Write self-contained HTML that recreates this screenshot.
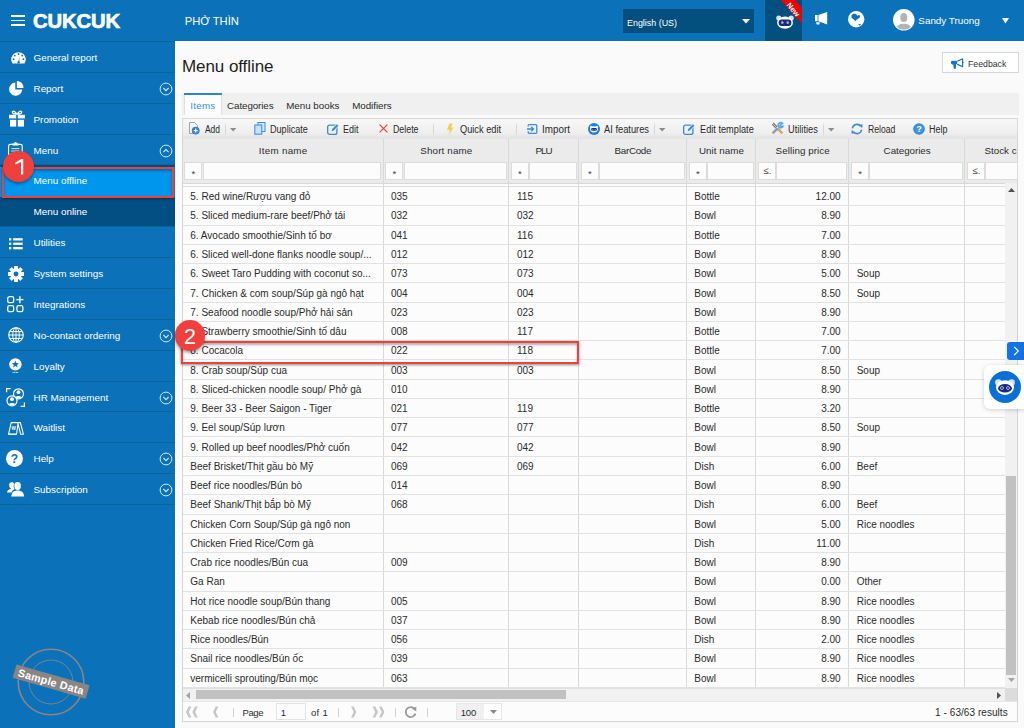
<!DOCTYPE html><html><head><meta charset='utf-8'><style>
*{box-sizing:border-box}
html,body{margin:0;padding:0}
body{width:1024px;height:728px;overflow:hidden;position:relative;background:#fafafa;font-family:'Liberation Sans',sans-serif;}
.t{position:absolute;line-height:normal;white-space:nowrap}
.r{position:absolute}
svg{position:absolute;overflow:visible}
</style></head><body>
<div class='r' style='left:0px;top:0px;width:1024px;height:41px;background:#0b71b8'></div>
<div class='r' style='left:11px;top:14.8px;width:13.8px;height:1.8px;background:#fff'></div>
<div class='r' style='left:11px;top:19.6px;width:13.8px;height:1.8px;background:#fff'></div>
<div class='r' style='left:11px;top:24.4px;width:13.8px;height:1.8px;background:#fff'></div>
<div class='t' style='top:10px;font-size:20.2px;color:#fff;font-weight:bold;left:33px;-webkit-text-stroke:0.7px #fff;letter-spacing:-0.1px'>CUKCUK</div>
<div class='t' style='top:15px;font-size:11.2px;color:#fff;left:184.7px;'>PHỞ THÌN</div>
<div class='r' style='left:622.8px;top:8.8px;width:131px;height:24px;background:#03507f'></div>
<div class='t' style='top:17px;font-size:9.8px;color:#fff;transform:scaleX(0.9090);transform-origin:0 0;left:627px;'>English (US)</div>
<svg style='left:742px;top:19px' width='8' height='5'><path d='M0 0H8L4 4.5Z' fill='#fff'/></svg>
<div class='r' style='left:765px;top:0px;width:37px;height:41px;background:#03507f'></div>
<svg style='left:765px;top:0' width='37' height='41'><polygon points='16,0 30.3,0 36.8,7.5 36.8,23.8' fill='#f20000'/><text x='0' y='0' transform='translate(28.2,9.6) rotate(49)' font-family='Liberation Sans' font-weight='bold' font-size='7.6' fill='#fff' text-anchor='middle' dominant-baseline='central'>New</text></svg>
<svg style='left:776px;top:15px' width='18' height='14' viewBox='0 0 18 14'>
<circle cx='2.8' cy='3' r='2.6' fill='#cfe6f7'/><circle cx='15.2' cy='3' r='2.6' fill='#cfe6f7'/>
<ellipse cx='9' cy='7.6' rx='8' ry='6.2' fill='#fff'/>
<rect x='2.6' y='4.6' width='12.8' height='6.4' rx='3.2' fill='#1a2a80'/>
<circle cx='6.3' cy='7.6' r='1.3' fill='#9ab3d8'/><circle cx='11.7' cy='7.6' r='1.3' fill='#9ab3d8'/>
</svg>
<svg style='left:815px;top:12px' width='13' height='13' viewBox='0 0 13 13'>
<rect x='0' y='3' width='2.6' height='6.2' fill='#fff'/>
<polygon points='3.4,3 12.2,0 12.2,12.5 3.4,9.3' fill='#fff'/>
<path d='M1 10.2 H5 L4.2 12.6 H1.8Z' fill='#fff'/>
</svg>
<svg style='left:847.8px;top:10.6px' width='16.4' height='16.4' viewBox='0 0 16 16'>
<circle cx='8' cy='8' r='8' fill='#fff'/>
<path d='M3.4 4.4 C4.2 3.2 5.2 2.7 6.3 2.8 C7.2 2.8 8 3.2 8.4 3.6 L9.1 4.6 L10.6 4 L11.9 4.7 C11.6 5.8 11.4 6.5 10.8 7 C10 7.5 9.4 7.7 8.8 8.2 L7 10 C6.5 9.2 6 8.6 5.4 8.1 C4.4 7.6 3.6 7 3.4 6.4Z' fill='#0b71b8'/>
<path d='M10 12.4 L13 13.2 L10.8 14.4Z' fill='#0b71b8'/>
</svg>
<svg style='left:892.7px;top:8.7px' width='21.6' height='21.6' viewBox='0 0 22 22'>
<circle cx='11' cy='11' r='11' fill='#fff'/>
<clipPath id='avc'><circle cx='11' cy='11' r='10.2'/></clipPath>
<g clip-path='url(#avc)' fill='#b3b3b3'><ellipse cx='11' cy='8.6' rx='3.6' ry='4.6'/><path d='M3 22 C3.6 16.6 6.5 15 11 15 C15.5 15 18.4 16.6 19 22Z'/></g>
</svg>
<div class='t' style='top:15px;font-size:9.9px;color:#fff;left:918.3px;'>Sandy Truong</div>
<svg style='left:1002px;top:17.5px' width='7' height='6'><path d='M0 0H7L3.5 5.5Z' fill='#fff'/></svg>
<div class='r' style='left:0px;top:41px;width:175px;height:687px;background:#0b71b8'></div>
<div class='r' style='left:0px;top:164.98000000000002px;width:175px;height:61.74px;background:#034f84'></div>
<div class='r' style='left:0px;top:167px;width:175px;height:29.5px;background:#0096ee'></div>
<div class='r' style='left:0px;top:41px;width:175px;height:1px;background:#08659a'></div>
<div class='r' style='left:0px;top:72px;width:175px;height:1px;background:#08659a'></div>
<div class='r' style='left:0px;top:103px;width:175px;height:1px;background:#08659a'></div>
<div class='r' style='left:0px;top:134px;width:175px;height:1px;background:#08659a'></div>
<div class='r' style='left:0px;top:164px;width:175px;height:1px;background:#08659a'></div>
<div class='r' style='left:0px;top:226px;width:175px;height:1px;background:#08659a'></div>
<div class='r' style='left:0px;top:257px;width:175px;height:1px;background:#08659a'></div>
<div class='r' style='left:0px;top:288px;width:175px;height:1px;background:#08659a'></div>
<div class='r' style='left:0px;top:319px;width:175px;height:1px;background:#08659a'></div>
<div class='r' style='left:0px;top:350px;width:175px;height:1px;background:#08659a'></div>
<div class='r' style='left:0px;top:381px;width:175px;height:1px;background:#08659a'></div>
<div class='r' style='left:0px;top:411px;width:175px;height:1px;background:#08659a'></div>
<div class='r' style='left:0px;top:442px;width:175px;height:1px;background:#08659a'></div>
<div class='r' style='left:0px;top:473px;width:175px;height:1px;background:#08659a'></div>
<div class='r' style='left:0px;top:504px;width:175px;height:1px;background:#08659a'></div>
<div class='t' style='top:52px;font-size:9.9px;color:#fff;left:33.5px;'>General report</div>
<div class='t' style='top:83px;font-size:9.9px;color:#fff;left:33.5px;'>Report</div>
<div class='t' style='top:114px;font-size:9.9px;color:#fff;left:33.5px;'>Promotion</div>
<div class='t' style='top:145px;font-size:9.9px;color:#fff;left:33.5px;'>Menu</div>
<div class='t' style='top:175px;font-size:9.9px;color:#fff;left:33.5px;'>Menu offline</div>
<div class='t' style='top:206px;font-size:9.9px;color:#fff;left:33.5px;'>Menu online</div>
<div class='t' style='top:237px;font-size:9.9px;color:#fff;left:33.5px;'>Utilities</div>
<div class='t' style='top:268px;font-size:9.9px;color:#fff;left:33.5px;'>System settings</div>
<div class='t' style='top:299px;font-size:9.9px;color:#fff;left:33.5px;'>Integrations</div>
<div class='t' style='top:330px;font-size:9.9px;color:#fff;left:33.5px;'>No-contact ordering</div>
<div class='t' style='top:361px;font-size:9.9px;color:#fff;left:33.5px;'>Loyalty</div>
<div class='t' style='top:392px;font-size:9.9px;color:#fff;left:33.5px;'>HR Management</div>
<div class='t' style='top:422px;font-size:9.9px;color:#fff;left:33.5px;'>Waitlist</div>
<div class='t' style='top:453px;font-size:9.9px;color:#fff;left:33.5px;'>Help</div>
<div class='t' style='top:484px;font-size:9.9px;color:#fff;left:33.5px;'>Subscription</div>
<svg style='left:159px;top:81.97px' width='14' height='14' viewBox='-7 -7 14 14'><circle r='5.9' fill='none' stroke='#d6e8f5' stroke-width='1'/><path d='M-2.6 -1.0 L0 1.6 L2.6 -1.0' fill='none' stroke='#d6e8f5' stroke-width='1.1'/></svg>
<svg style='left:159px;top:328.93px' width='14' height='14' viewBox='-7 -7 14 14'><circle r='5.9' fill='none' stroke='#d6e8f5' stroke-width='1'/><path d='M-2.6 -1.0 L0 1.6 L2.6 -1.0' fill='none' stroke='#d6e8f5' stroke-width='1.1'/></svg>
<svg style='left:159px;top:390.67px' width='14' height='14' viewBox='-7 -7 14 14'><circle r='5.9' fill='none' stroke='#d6e8f5' stroke-width='1'/><path d='M-2.6 -1.0 L0 1.6 L2.6 -1.0' fill='none' stroke='#d6e8f5' stroke-width='1.1'/></svg>
<svg style='left:159px;top:452.41px' width='14' height='14' viewBox='-7 -7 14 14'><circle r='5.9' fill='none' stroke='#d6e8f5' stroke-width='1'/><path d='M-2.6 -1.0 L0 1.6 L2.6 -1.0' fill='none' stroke='#d6e8f5' stroke-width='1.1'/></svg>
<svg style='left:159px;top:483.28000000000003px' width='14' height='14' viewBox='-7 -7 14 14'><circle r='5.9' fill='none' stroke='#d6e8f5' stroke-width='1'/><path d='M-2.6 -1.0 L0 1.6 L2.6 -1.0' fill='none' stroke='#d6e8f5' stroke-width='1.1'/></svg>
<svg style='left:159px;top:143.71px' width='14' height='14' viewBox='-7 -7 14 14'><circle r='5.9' fill='none' stroke='#d6e8f5' stroke-width='1'/><path d='M-2.6 1.2 L0 -1.4 L2.6 1.2' fill='none' stroke='#d6e8f5' stroke-width='1.1'/></svg>
<svg style='left:10.5px;top:52px' width='15' height='12' viewBox='0 0 15 12'>
<path d='M1.5 11.6 A7.3 7.3 0 1 1 13.5 11.6 Z' fill='#fff'/>
<circle cx='2.6' cy='7.2' r='0.9' fill='#0b71b8'/><circle cx='3.8' cy='3.6' r='0.9' fill='#0b71b8'/><circle cx='7.5' cy='2' r='0.9' fill='#0b71b8'/><circle cx='11.2' cy='3.6' r='0.9' fill='#0b71b8'/><circle cx='12.4' cy='7.2' r='0.9' fill='#0b71b8'/>
<path d='M7.1 10.6 L8.6 4.6 L8.2 10.6Z' fill='#0b71b8'/><circle cx='7.6' cy='10.4' r='1.2' fill='#0b71b8'/>
</svg>
<svg style='left:8.5px;top:81px' width='15' height='15' viewBox='0 0 15 15'>
<path d='M6.3 1.6 A6.6 6.6 0 1 0 13.3 8.6 L6.3 8.6Z' fill='#fff'/>
<path d='M7.9 0 A6.6 6.6 0 0 1 14.6 6.9 L7.9 6.9Z' fill='#fff'/>
</svg>
<svg style='left:9px;top:110.4px' width='16' height='17' viewBox='0 0 16 17'>
<path d='M7.6 4.2 C6.5 1.2 3.6 0.4 3.3 2.2 C3.0 3.6 5.6 4.2 7.6 4.2Z M8.4 4.2 C9.5 1.2 12.4 0.4 12.7 2.2 C13.0 3.6 10.4 4.2 8.4 4.2Z' fill='none' stroke='#fff' stroke-width='1.3'/>
<rect x='0' y='4.8' width='7.2' height='3.6' fill='#fff'/><rect x='8.8' y='4.8' width='7.2' height='3.6' fill='#fff'/>
<rect x='1' y='9.8' width='6.2' height='6.8' fill='#fff'/><rect x='8.8' y='9.8' width='6.2' height='6.8' fill='#fff'/>
</svg>
<svg style='left:8.2px;top:141.8px' width='15' height='17' viewBox='0 0 15 17'>
<rect x='0.6' y='2.4' width='13.6' height='14' rx='1.6' fill='none' stroke='#fff' stroke-width='1.1'/>
<path d='M4.4 3.6 V1.6 H6 A1.5 1.5 0 0 1 9 1.6 H10.6 V3.6Z' fill='#fff'/>
<rect x='3.4' y='6.2' width='8' height='0.9' fill='#fff'/><rect x='3.4' y='8.6' width='8' height='0.9' fill='#fff'/><rect x='3.4' y='11' width='8' height='0.9' fill='#fff'/>
</svg>
<svg style='left:9px;top:237.8px' width='14' height='12' viewBox='0 0 14 12'>
<rect x='0' y='0.2' width='2.3' height='2.3' fill='#fff'/><rect x='0' y='4.6' width='2.3' height='2.3' fill='#fff'/><rect x='0' y='9' width='2.3' height='2.3' fill='#fff'/>
<rect x='4.2' y='0.2' width='9.5' height='2.3' fill='#fff'/><rect x='4.2' y='4.6' width='9.5' height='2.3' fill='#fff'/><rect x='4.2' y='9' width='9.5' height='2.3' fill='#fff'/>
</svg>
<svg style='left:8.2px;top:265.5px' width='16' height='16' viewBox='-8 -8 16 16'><rect x='-1.9' y='-8' width='3.8' height='4' rx='0.6' transform='rotate(0)' fill='#fff'/><rect x='-1.9' y='-8' width='3.8' height='4' rx='0.6' transform='rotate(45)' fill='#fff'/><rect x='-1.9' y='-8' width='3.8' height='4' rx='0.6' transform='rotate(90)' fill='#fff'/><rect x='-1.9' y='-8' width='3.8' height='4' rx='0.6' transform='rotate(135)' fill='#fff'/><rect x='-1.9' y='-8' width='3.8' height='4' rx='0.6' transform='rotate(180)' fill='#fff'/><rect x='-1.9' y='-8' width='3.8' height='4' rx='0.6' transform='rotate(225)' fill='#fff'/><rect x='-1.9' y='-8' width='3.8' height='4' rx='0.6' transform='rotate(270)' fill='#fff'/><rect x='-1.9' y='-8' width='3.8' height='4' rx='0.6' transform='rotate(315)' fill='#fff'/>
<circle r='5.7' fill='#fff'/><circle r='2.4' fill='#0b71b8'/></svg>
<svg style='left:6.9px;top:296.4px' width='17' height='17' viewBox='0 0 17 17'>
<rect x='0.7' y='0.7' width='6' height='6' rx='1.8' fill='none' stroke='#fff' stroke-width='1.3'/>
<rect x='0.7' y='9.7' width='6' height='6' rx='1.8' fill='none' stroke='#fff' stroke-width='1.3'/>
<rect x='9.9' y='9.7' width='6' height='6' rx='1.8' fill='none' stroke='#fff' stroke-width='1.3'/>
<path d='M12.9 0.2 V7.2 M9.4 3.7 H16.4' stroke='#fff' stroke-width='1.3'/>
</svg>
<svg style='left:8.2px;top:327px' width='16' height='16' viewBox='-8 -8 16 16'>
<circle r='7.3' fill='none' stroke='#fff' stroke-width='1.1'/>
<ellipse rx='3.3' ry='7.3' fill='none' stroke='#fff' stroke-width='1'/>
<path d='M0 -7.3 V7.3 M-7.3 0 H7.3 M-6.4 -3.4 H6.4 M-6.4 3.4 H6.4' stroke='#fff' stroke-width='1'/>
</svg>
<svg style='left:9px;top:357.6px' width='13' height='16' viewBox='0 0 13 16'>
<circle cx='6.4' cy='6.4' r='6.2' fill='#fff'/>
<path d='M6.4 2.6 L7.4 5.1 L10 5.2 L8 6.9 L8.7 9.5 L6.4 8 L4.1 9.5 L4.8 6.9 L2.8 5.2 L5.4 5.1Z' fill='#0b71b8'/>
<path d='M3.6 14.4 H9.2' stroke='#fff' stroke-width='1' stroke-dasharray='1 0.6'/>
</svg>
<svg style='left:6px;top:387.8px' width='19' height='19' viewBox='0 0 19 19'>
<clipPath id='hr1'><circle cx='12.5' cy='5.8' r='4.5'/></clipPath><clipPath id='hr2'><circle cx='6' cy='12.8' r='4.5'/></clipPath>
<path d='M0.6 4.2 V0.6 H4.6 M14.6 18.4 H18.4 V14.4' fill='none' stroke='#fff' stroke-width='1.2'/>
<circle cx='12.5' cy='5.8' r='5' fill='#0b71b8' stroke='#fff' stroke-width='1.2'/>
<g clip-path='url(#hr1)' fill='#fff'><circle cx='12.5' cy='4.2' r='1.9'/><ellipse cx='12.5' cy='10.8' rx='3.8' ry='2.9'/></g>
<circle cx='6' cy='12.8' r='5' fill='#0b71b8' stroke='#fff' stroke-width='1.2'/>
<g clip-path='url(#hr2)' fill='#fff'><circle cx='6' cy='11.2' r='1.9'/><ellipse cx='6' cy='17.8' rx='3.8' ry='2.9'/></g>
</svg>
<svg style='left:7.8px;top:422px' width='16' height='13' viewBox='0 0 16 13'>
<path d='M0.6 12.2 L3.2 0.6 H12.4 L15.4 12.2 H12.6 L10 1.6 L8.6 12.2Z' fill='none' stroke='#fff' stroke-width='1.1' stroke-linejoin='round'/>
<path d='M0.6 12.2 H8.6' stroke='#fff' stroke-width='1.1'/>
<text x='5.6' y='7.6' font-size='4.6' font-family='Liberation Sans' font-weight='bold' fill='#fff' text-anchor='middle'>W</text>
</svg>
<svg style='left:6.2px;top:449.9px' width='17' height='17' viewBox='-8.5 -8.5 17 17'>
<circle r='8.5' fill='#fff'/>
<text x='0' y='4.3' font-size='12' font-family='Liberation Sans' font-weight='bold' fill='#0b71b8' text-anchor='middle'>?</text>
</svg>
<svg style='left:6.6px;top:482.3px' width='18' height='15' viewBox='0 0 18 15'>
<path d='M4.8 0.2 C2.6 0.2 2 2 2.2 3.6 C2.4 5.2 3.2 6.6 4.4 6.8 C1.8 7.4 0.4 8.6 0 10.4 L4.6 10.4 C5 8.8 6.4 7.6 7.6 7.2 C6.4 5.6 6.6 3 7 1.4 C6.6 0.6 5.8 0.2 4.8 0.2Z' fill='#fff'/>
<ellipse cx='10.6' cy='4' rx='3.3' ry='3.9' fill='#fff'/>
<path d='M10.6 8.6 C6.6 8.6 4.6 10.6 4.2 14.6 H17.2 C16.8 10.6 14.6 8.6 10.6 8.6Z' fill='#fff'/>
</svg>
<svg style='left:10px;top:641px' width='82' height='82' viewBox='-41 -41 82 82'>
<circle r='32.8' fill='none' stroke='#8d8580' stroke-width='1.6'/>
<circle r='22' fill='none' stroke='#8d8580' stroke-width='0.9'/>
<g transform='rotate(16)'><rect x='-38' y='-7.4' width='76' height='14' fill='#8a8584'/>
<text x='0' y='3.6' font-size='10.8' font-family='Liberation Sans' font-weight='bold' letter-spacing='0.3' fill='#fff' text-anchor='middle'>Sample Data</text></g>
</svg>
<div class='t' style='top:57px;font-size:17px;color:#1e1e1e;letter-spacing:-0.074px;left:182px;'>Menu offline</div>
<div class='r' style='left:942.4px;top:52.3px;width:76.4px;height:21.2px;background:#fff;border:1px solid #d7d7d7'></div>
<svg style='left:951px;top:58px' width='14' height='12' viewBox='0 0 14 12'>
<rect x='0' y='2.7' width='6.2' height='3.8' rx='1.4' fill='#1976c2'/>
<path d='M2.2 5.2 H5 L4.9 10.2 Q4.8 10.9 3.7 10.9 Q2.7 10.9 2.6 10.2Z' fill='#1976c2'/>
<path d='M6.2 3.2 L11.6 0.9 V8.7 L6.2 6.1' fill='none' stroke='#1976c2' stroke-width='1.2' stroke-linejoin='round'/>
<path d='M11.8 3.9 L12.9 4.6 L11.8 5.4Z' fill='#1976c2'/>
</svg>
<div class='t' style='top:58px;font-size:9.6px;color:#333;transform:scaleX(0.9103);transform-origin:0 0;left:967.8px;'>Feedback</div>
<div class='r' style='left:182.3px;top:93px;width:836.3px;height:21.8px;background:#f0f0f0'></div>
<div class='r' style='left:183.5px;top:93px;width:38px;height:22px;background:#fcfcfc;border-left:1px solid #e0e0e0;border-right:1px solid #e0e0e0'></div>
<div class='r' style='left:183.5px;top:93px;width:38px;height:2px;background:#2c84d2'></div>
<div class='t' style='top:100px;font-size:9.8px;color:#3d8fd6;letter-spacing:0.235px;left:190.3px;'>Items</div>
<div class='t' style='top:100px;font-size:9.8px;color:#2b2b2b;letter-spacing:-0.099px;left:227.1px;'>Categories</div>
<div class='t' style='top:100px;font-size:9.8px;color:#2b2b2b;letter-spacing:-0.010px;left:286.2px;'>Menu books</div>
<div class='t' style='top:100px;font-size:9.8px;color:#2b2b2b;letter-spacing:-0.045px;left:352.2px;'>Modifiers</div>
<div class='r' style='left:182.3px;top:118px;width:836px;height:21px;background:linear-gradient(#f8f8f8,#eeeeee 70%,#e2e2e2);border:1px solid #d9d9d9;border-bottom:none'></div>
<div class='t' style='top:124px;font-size:10px;color:#2b2b2b;transform:scaleX(0.8432);transform-origin:0 0;left:205px;'>Add</div>
<div class='t' style='top:124px;font-size:10px;color:#2b2b2b;transform:scaleX(0.9067);transform-origin:0 0;left:270.4px;'>Duplicate</div>
<div class='t' style='top:124px;font-size:10px;color:#2b2b2b;transform:scaleX(0.8996);transform-origin:0 0;left:343px;'>Edit</div>
<div class='t' style='top:124px;font-size:10px;color:#2b2b2b;transform:scaleX(0.8820);transform-origin:0 0;left:393px;'>Delete</div>
<div class='t' style='top:124px;font-size:10px;color:#2b2b2b;transform:scaleX(0.9222);transform-origin:0 0;left:460px;'>Quick edit</div>
<div class='t' style='top:124px;font-size:10px;color:#2b2b2b;transform:scaleX(0.9880);transform-origin:0 0;left:542px;'>Import</div>
<div class='t' style='top:124px;font-size:10px;color:#2b2b2b;transform:scaleX(0.9305);transform-origin:0 0;left:604.4px;'>AI features</div>
<div class='t' style='top:124px;font-size:10px;color:#2b2b2b;transform:scaleX(0.9210);transform-origin:0 0;left:699.75px;'>Edit template</div>
<div class='t' style='top:124px;font-size:10px;color:#2b2b2b;transform:scaleX(0.9231);transform-origin:0 0;left:788px;'>Utilities</div>
<div class='t' style='top:124px;font-size:10px;color:#2b2b2b;transform:scaleX(0.8599);transform-origin:0 0;left:867.5px;'>Reload</div>
<div class='t' style='top:124px;font-size:10px;color:#2b2b2b;transform:scaleX(0.8994);transform-origin:0 0;left:929px;'>Help</div>
<div class='r' style='left:224.75px;top:121.5px;width:1px;height:15px;background:linear-gradient(rgba(0,0,0,0),#d6d6d6 30%,#d6d6d6 70%,rgba(0,0,0,0))'></div>
<div class='r' style='left:433px;top:121.5px;width:1px;height:15px;background:linear-gradient(rgba(0,0,0,0),#d6d6d6 30%,#d6d6d6 70%,rgba(0,0,0,0))'></div>
<div class='r' style='left:515.6px;top:121.5px;width:1px;height:15px;background:linear-gradient(rgba(0,0,0,0),#d6d6d6 30%,#d6d6d6 70%,rgba(0,0,0,0))'></div>
<div class='r' style='left:653.75px;top:121.5px;width:1px;height:15px;background:linear-gradient(rgba(0,0,0,0),#d6d6d6 30%,#d6d6d6 70%,rgba(0,0,0,0))'></div>
<div class='r' style='left:823px;top:121.5px;width:1px;height:15px;background:linear-gradient(rgba(0,0,0,0),#d6d6d6 30%,#d6d6d6 70%,rgba(0,0,0,0))'></div>
<svg style='left:229.75px;top:128px' width='7' height='4'><path d='M0 0H6.4L3.2 3.6Z' fill='#8c8c8c'/></svg>
<svg style='left:659.4px;top:128px' width='7' height='4'><path d='M0 0H6.4L3.2 3.6Z' fill='#8c8c8c'/></svg>
<svg style='left:827.5px;top:128px' width='7' height='4'><path d='M0 0H6.4L3.2 3.6Z' fill='#8c8c8c'/></svg>
<svg style='left:189px;top:122.2px' width='11' height='13' viewBox='0 0 11 13'>
<path d='M0.5 0.5 H5.6 L8.4 3.3 V7 M0.5 0.5 V11.5 H5' fill='#f4f4f4' stroke='#9a9a9a' stroke-width='0.9'/>
<circle cx='6.7' cy='8.6' r='3.9' fill='#2f82d0'/>
<path d='M6.7 6.6 V10.6 M4.7 8.6 H8.7' stroke='#fff' stroke-width='1.2'/>
</svg>
<svg style='left:254px;top:122px' width='12' height='13' viewBox='0 0 12 13'>
<rect x='4' y='0.5' width='7' height='9' fill='#d7ebfb' stroke='#3b8bd8' stroke-width='1'/>
<rect x='0.8' y='3' width='7' height='9.2' fill='#c5e1f8' stroke='#3b8bd8' stroke-width='1'/>
</svg>
<svg style='left:326.5px;top:122.8px' width='12' height='12' viewBox='0 0 12.5 12'><rect x='0.7' y='2' width='9.6' height='9.6' rx='2' fill='none' stroke='#3b8bd8' stroke-width='1.4'/>
<path d='M4.2 9 L4.9 5.6 L10.3 0.2 L12.8 2.7 L7.4 8.1Z' fill='#f3f3f3'/><path d='M4.8 8.4 L5.4 6 L10.3 1.1 L11.9 2.7 L7 7.6Z' fill='#3b8bd8'/></svg>
<svg style='left:683px;top:122.8px' width='12' height='12' viewBox='0 0 12.5 12'><rect x='0.7' y='2' width='9.6' height='9.6' rx='2' fill='none' stroke='#3b8bd8' stroke-width='1.4'/>
<path d='M4.2 9 L4.9 5.6 L10.3 0.2 L12.8 2.7 L7.4 8.1Z' fill='#f3f3f3'/><path d='M4.8 8.4 L5.4 6 L10.3 1.1 L11.9 2.7 L7 7.6Z' fill='#3b8bd8'/></svg>
<svg style='left:378.5px;top:124px' width='9' height='9' viewBox='0 0 9 9'>
<path d='M0.6 0.6 L8.4 8.4 M8.4 0.6 L0.6 8.4' stroke='#e8423b' stroke-width='1.2'/></svg>
<svg style='left:446px;top:122.5px' width='8' height='12' viewBox='0 0 8 12'>
<path d='M3.4 0.6 H6.6 L5.1 4.6 H7.4 L2.8 12 L3.7 6.8 H1Z' fill='#f5cf45'/></svg>
<svg style='left:527px;top:124px' width='11' height='10' viewBox='0 0 11 10'>
<path d='M1.2 2.6 V1.6 Q1.2 0.7 2.2 0.7 H8.8 Q9.8 0.7 9.8 1.7 V8.3 Q9.8 9.3 8.8 9.3 H2.2 Q1.2 9.3 1.2 8.3 V7.2' fill='none' stroke='#3b8bd8' stroke-width='1.3'/>
<path d='M0 5 H6.4 M4.2 2.8 L6.5 5 L4.2 7.2' fill='none' stroke='#3b8bd8' stroke-width='1.3'/></svg>
<svg style='left:588px;top:122.6px' width='12' height='12' viewBox='-6 -6 12 12'>
<circle r='6' fill='#1a7be6'/><circle cx='-2.9' cy='-2' r='1.3' fill='#dbe9f8'/><circle cx='2.9' cy='-2' r='1.3' fill='#dbe9f8'/><ellipse cx='0' cy='0.3' rx='3.9' ry='3.1' fill='#fff'/><rect x='-2.9' y='-1' width='5.8' height='2.8' rx='1.3' fill='#1b2f86'/>
<circle cx='-1.2' cy='0.4' r='0.5' fill='#8fb5e8'/><circle cx='1.2' cy='0.4' r='0.5' fill='#8fb5e8'/></svg>
<svg style='left:771px;top:122.4px' width='13' height='13' viewBox='0 0 13 13'>
<path d='M1.6 11.4 L6.5 6.5' stroke='#d9a664' stroke-width='2.6'/>
<path d='M6.5 6.5 L11.4 11.4' stroke='#d9a664' stroke-width='2.6'/>
<path d='M2.2 1 L6.2 5 M1 2.2 L5 6.2' stroke='#7a7a7a' stroke-width='1.2'/>
<path d='M11.6 1.4 A2.6 2.6 0 1 0 12 4.4 L10 4.6 L9 3.4Z M6.6 6.4 L2.2 10.8' stroke='#55a8e8' stroke-width='1.6' fill='none'/>
</svg>
<svg style='left:851px;top:122.6px' width='12' height='12' viewBox='-6 -6 12 12'>
<path d='M-4.6 -0.6 A4.6 4.6 0 0 1 3.6 -2.8' fill='none' stroke='#3b8bd8' stroke-width='1.5'/>
<path d='M4.6 0.6 A4.6 4.6 0 0 1 -3.6 2.8' fill='none' stroke='#3b8bd8' stroke-width='1.5'/>
<path d='M1.8 -4.6 L5.6 -4.6 L5.2 -0.8Z' fill='#3b8bd8'/><path d='M-1.8 4.6 L-5.6 4.6 L-5.2 0.8Z' fill='#3b8bd8'/>
</svg>
<svg style='left:913px;top:122.6px' width='12' height='12' viewBox='-6 -6 12 12'>
<circle r='5.8' fill='#2f86d6'/><circle r='4.6' fill='#3f97e2'/>
<text x='0' y='3.2' font-size='8.6' font-weight='bold' font-family='Liberation Sans' fill='#fff' text-anchor='middle'>?</text></svg>
<div class='r' style='left:182px;top:139px;width:836.3px;height:583.4px;background:#fcfcfc;border:1px solid #d4d4d4;border-top:none'></div>
<div class='r' style='left:183px;top:139px;width:834.3px;height:44px;background:#ebebeb'></div>
<div class='r' style='left:183px;top:182.5px;width:834.3px;height:1px;background:#d8d8d8'></div>
<div class='r' style='left:183px;top:186.3px;width:822px;height:1px;background:#dedede'></div>
<div class='t' style='top:145px;font-size:9.8px;color:#2b2b2b;letter-spacing:0.276px;left:258.75px;'>Item name</div>
<div class='r' style='left:184px;top:162.3px;width:18px;height:18px;background:#fcfcfc;border:1px solid #dcdcdc'></div>
<div class='r' style='left:202.5px;top:162.3px;width:178.5px;height:18px;background:#fcfcfc;border:1px solid #dcdcdc'></div>
<div class='t' style='top:168px;font-size:9.5px;color:#444;left:191.5px;'>*</div>
<div class='r' style='left:383px;top:139px;width:1px;height:548.5px;background:#d9d9d9'></div>
<div class='t' style='top:145px;font-size:9.8px;color:#2b2b2b;letter-spacing:0.149px;left:420.25px;'>Short name</div>
<div class='r' style='left:385px;top:162.3px;width:18px;height:18px;background:#fcfcfc;border:1px solid #dcdcdc'></div>
<div class='r' style='left:403.5px;top:162.3px;width:103.0px;height:18px;background:#fcfcfc;border:1px solid #dcdcdc'></div>
<div class='t' style='top:168px;font-size:9.5px;color:#444;left:392.5px;'>*</div>
<div class='r' style='left:508px;top:139px;width:1px;height:548.5px;background:#d9d9d9'></div>
<div class='t' style='top:145px;font-size:9.8px;color:#2b2b2b;letter-spacing:-1.030px;left:535.5px;'>PLU</div>
<div class='r' style='left:510.5px;top:162.3px;width:18px;height:18px;background:#fcfcfc;border:1px solid #dcdcdc'></div>
<div class='r' style='left:529.0px;top:162.3px;width:47.5px;height:18px;background:#fcfcfc;border:1px solid #dcdcdc'></div>
<div class='t' style='top:168px;font-size:9.5px;color:#444;left:518.0px;'>*</div>
<div class='r' style='left:578px;top:139px;width:1px;height:548.5px;background:#d9d9d9'></div>
<div class='t' style='top:145px;font-size:9.8px;color:#2b2b2b;letter-spacing:-0.280px;left:614.5px;'>BarCode</div>
<div class='r' style='left:580.5px;top:162.3px;width:18px;height:18px;background:#fcfcfc;border:1px solid #dcdcdc'></div>
<div class='r' style='left:599.0px;top:162.3px;width:85.5px;height:18px;background:#fcfcfc;border:1px solid #dcdcdc'></div>
<div class='t' style='top:168px;font-size:9.5px;color:#444;left:588.0px;'>*</div>
<div class='r' style='left:686px;top:139px;width:1px;height:548.5px;background:#d9d9d9'></div>
<div class='t' style='top:145px;font-size:9.8px;color:#2b2b2b;letter-spacing:0.041px;left:699.0px;'>Unit name</div>
<div class='r' style='left:688.5px;top:162.3px;width:18px;height:18px;background:#fcfcfc;border:1px solid #dcdcdc'></div>
<div class='r' style='left:707.0px;top:162.3px;width:46.5px;height:18px;background:#fcfcfc;border:1px solid #dcdcdc'></div>
<div class='t' style='top:168px;font-size:9.5px;color:#444;left:696.0px;'>*</div>
<div class='r' style='left:755px;top:139px;width:1px;height:548.5px;background:#d9d9d9'></div>
<div class='t' style='top:145px;font-size:9.8px;color:#2b2b2b;letter-spacing:0.052px;left:775.62px;'>Selling price</div>
<div class='r' style='left:757.5px;top:162.3px;width:18px;height:18px;background:#fcfcfc;border:1px solid #dcdcdc'></div>
<div class='r' style='left:776.0px;top:162.3px;width:70.75px;height:18px;background:#fcfcfc;border:1px solid #dcdcdc'></div>
<div class='t' style='top:165px;font-size:9.5px;color:#444;left:763.5px;'>≤.</div>
<div class='r' style='left:848px;top:139px;width:1px;height:548.5px;background:#d9d9d9'></div>
<div class='t' style='top:145px;font-size:9.8px;color:#2b2b2b;letter-spacing:-0.044px;left:883.62px;'>Categories</div>
<div class='r' style='left:850.75px;top:162.3px;width:18px;height:18px;background:#fcfcfc;border:1px solid #dcdcdc'></div>
<div class='r' style='left:869.25px;top:162.3px;width:93.25px;height:18px;background:#fcfcfc;border:1px solid #dcdcdc'></div>
<div class='t' style='top:168px;font-size:9.5px;color:#444;left:858.25px;'>*</div>
<div class='r' style='left:964px;top:139px;width:1px;height:548.5px;background:#d9d9d9'></div>
<div style='position:absolute;left:965px;top:140px;width:53px;height:20px;overflow:hidden'>
<div class='t' style='top:5px;font-size:9.8px;color:#2b2b2b;left:19.5px;'>Stock c</div>
</div>
<div class='r' style='left:966.5px;top:162.3px;width:18px;height:18px;background:#fcfcfc;border:1px solid #dcdcdc'></div>
<div class='r' style='left:985.0px;top:162.3px;width:33.299999999999955px;height:18px;background:#fcfcfc;border:1px solid #dcdcdc'></div>
<div class='t' style='top:165px;font-size:9.5px;color:#444;left:972.5px;'>≤.</div>
<div class='r' style='left:183px;top:205px;width:822px;height:1px;background:#e2e2e2'></div>
<div class='t' style='top:191px;font-size:10px;color:#2b2b2b;left:190.3px;'>5. Red wine/Rượu vang đỏ</div>
<div class='t' style='top:191px;font-size:10px;color:#2b2b2b;left:391px;'>035</div>
<div class='t' style='top:191px;font-size:10px;color:#2b2b2b;left:517px;'>115</div>
<div class='t' style='top:191px;font-size:10px;color:#2b2b2b;left:694.3px;'>Bottle</div>
<div class='t' style='top:191px;font-size:10px;color:#2b2b2b;right:183.39999999999998px;'>12.00</div>
<div class='r' style='left:183px;top:225px;width:822px;height:1px;background:#e2e2e2'></div>
<div class='t' style='top:210px;font-size:10px;color:#2b2b2b;left:190.3px;'>5. Sliced medium-rare beef/Phở tái</div>
<div class='t' style='top:210px;font-size:10px;color:#2b2b2b;left:391px;'>032</div>
<div class='t' style='top:210px;font-size:10px;color:#2b2b2b;left:517px;'>032</div>
<div class='t' style='top:210px;font-size:10px;color:#2b2b2b;left:694.3px;'>Bowl</div>
<div class='t' style='top:210px;font-size:10px;color:#2b2b2b;right:183.39999999999998px;'>8.90</div>
<div class='r' style='left:183px;top:244px;width:822px;height:1px;background:#e2e2e2'></div>
<div class='t' style='top:230px;font-size:10px;color:#2b2b2b;left:190.3px;'>6. Avocado smoothie/Sinh tố bơ</div>
<div class='t' style='top:230px;font-size:10px;color:#2b2b2b;left:391px;'>041</div>
<div class='t' style='top:230px;font-size:10px;color:#2b2b2b;left:517px;'>116</div>
<div class='t' style='top:230px;font-size:10px;color:#2b2b2b;left:694.3px;'>Bottle</div>
<div class='t' style='top:230px;font-size:10px;color:#2b2b2b;right:183.39999999999998px;'>7.00</div>
<div class='r' style='left:183px;top:263px;width:822px;height:1px;background:#e2e2e2'></div>
<div class='t' style='top:249px;font-size:10px;color:#2b2b2b;left:190.3px;'>6. Sliced well-done flanks noodle soup/...</div>
<div class='t' style='top:249px;font-size:10px;color:#2b2b2b;left:391px;'>012</div>
<div class='t' style='top:249px;font-size:10px;color:#2b2b2b;left:517px;'>012</div>
<div class='t' style='top:249px;font-size:10px;color:#2b2b2b;left:694.3px;'>Bowl</div>
<div class='t' style='top:249px;font-size:10px;color:#2b2b2b;right:183.39999999999998px;'>8.90</div>
<div class='r' style='left:183px;top:282px;width:822px;height:1px;background:#e2e2e2'></div>
<div class='t' style='top:268px;font-size:10px;color:#2b2b2b;left:190.3px;'>6. Sweet Taro Pudding with coconut so...</div>
<div class='t' style='top:268px;font-size:10px;color:#2b2b2b;left:391px;'>073</div>
<div class='t' style='top:268px;font-size:10px;color:#2b2b2b;left:517px;'>073</div>
<div class='t' style='top:268px;font-size:10px;color:#2b2b2b;left:694.3px;'>Bowl</div>
<div class='t' style='top:268px;font-size:10px;color:#2b2b2b;right:183.39999999999998px;'>5.00</div>
<div class='t' style='top:268px;font-size:10px;color:#2b2b2b;left:856.7px;'>Soup</div>
<div class='r' style='left:183px;top:302px;width:822px;height:1px;background:#e2e2e2'></div>
<div class='t' style='top:288px;font-size:10px;color:#2b2b2b;left:190.3px;'>7. Chicken &amp; com soup/Súp gà ngô hạt</div>
<div class='t' style='top:288px;font-size:10px;color:#2b2b2b;left:391px;'>004</div>
<div class='t' style='top:288px;font-size:10px;color:#2b2b2b;left:517px;'>004</div>
<div class='t' style='top:288px;font-size:10px;color:#2b2b2b;left:694.3px;'>Bowl</div>
<div class='t' style='top:288px;font-size:10px;color:#2b2b2b;right:183.39999999999998px;'>8.50</div>
<div class='t' style='top:288px;font-size:10px;color:#2b2b2b;left:856.7px;'>Soup</div>
<div class='r' style='left:183px;top:321px;width:822px;height:1px;background:#e2e2e2'></div>
<div class='t' style='top:307px;font-size:10px;color:#2b2b2b;left:190.3px;'>7. Seafood noodle soup/Phở hải sản</div>
<div class='t' style='top:307px;font-size:10px;color:#2b2b2b;left:391px;'>023</div>
<div class='t' style='top:307px;font-size:10px;color:#2b2b2b;left:517px;'>023</div>
<div class='t' style='top:307px;font-size:10px;color:#2b2b2b;left:694.3px;'>Bowl</div>
<div class='t' style='top:307px;font-size:10px;color:#2b2b2b;right:183.39999999999998px;'>8.90</div>
<div class='r' style='left:183px;top:340px;width:822px;height:1px;background:#e2e2e2'></div>
<div class='t' style='top:326px;font-size:10px;color:#2b2b2b;left:190.3px;'>8. Strawberry smoothie/Sinh tố dâu</div>
<div class='t' style='top:326px;font-size:10px;color:#2b2b2b;left:391px;'>008</div>
<div class='t' style='top:326px;font-size:10px;color:#2b2b2b;left:517px;'>117</div>
<div class='t' style='top:326px;font-size:10px;color:#2b2b2b;left:694.3px;'>Bottle</div>
<div class='t' style='top:326px;font-size:10px;color:#2b2b2b;right:183.39999999999998px;'>7.00</div>
<div class='r' style='left:183px;top:359px;width:822px;height:1px;background:#e2e2e2'></div>
<div class='t' style='top:345px;font-size:10px;color:#2b2b2b;left:190.3px;'>8. Cocacola</div>
<div class='t' style='top:345px;font-size:10px;color:#2b2b2b;left:391px;'>022</div>
<div class='t' style='top:345px;font-size:10px;color:#2b2b2b;left:517px;'>118</div>
<div class='t' style='top:345px;font-size:10px;color:#2b2b2b;left:694.3px;'>Bottle</div>
<div class='t' style='top:345px;font-size:10px;color:#2b2b2b;right:183.39999999999998px;'>7.00</div>
<div class='r' style='left:183px;top:379px;width:822px;height:1px;background:#e2e2e2'></div>
<div class='t' style='top:365px;font-size:10px;color:#2b2b2b;left:190.3px;'>8. Crab soup/Súp cua</div>
<div class='t' style='top:365px;font-size:10px;color:#2b2b2b;left:391px;'>003</div>
<div class='t' style='top:365px;font-size:10px;color:#2b2b2b;left:517px;'>003</div>
<div class='t' style='top:365px;font-size:10px;color:#2b2b2b;left:694.3px;'>Bowl</div>
<div class='t' style='top:365px;font-size:10px;color:#2b2b2b;right:183.39999999999998px;'>8.50</div>
<div class='t' style='top:365px;font-size:10px;color:#2b2b2b;left:856.7px;'>Soup</div>
<div class='r' style='left:183px;top:398px;width:822px;height:1px;background:#e2e2e2'></div>
<div class='t' style='top:384px;font-size:10px;color:#2b2b2b;left:190.3px;'>8. Sliced-chicken noodle soup/ Phở gà</div>
<div class='t' style='top:384px;font-size:10px;color:#2b2b2b;left:391px;'>010</div>
<div class='t' style='top:384px;font-size:10px;color:#2b2b2b;left:694.3px;'>Bowl</div>
<div class='t' style='top:384px;font-size:10px;color:#2b2b2b;right:183.39999999999998px;'>8.90</div>
<div class='r' style='left:183px;top:417px;width:822px;height:1px;background:#e2e2e2'></div>
<div class='t' style='top:403px;font-size:10px;color:#2b2b2b;left:190.3px;'>9. Beer 33 - Beer Saigon - Tiger</div>
<div class='t' style='top:403px;font-size:10px;color:#2b2b2b;left:391px;'>021</div>
<div class='t' style='top:403px;font-size:10px;color:#2b2b2b;left:517px;'>119</div>
<div class='t' style='top:403px;font-size:10px;color:#2b2b2b;left:694.3px;'>Bottle</div>
<div class='t' style='top:403px;font-size:10px;color:#2b2b2b;right:183.39999999999998px;'>3.20</div>
<div class='r' style='left:183px;top:436px;width:822px;height:1px;background:#e2e2e2'></div>
<div class='t' style='top:422px;font-size:10px;color:#2b2b2b;left:190.3px;'>9. Eel soup/Súp lươn</div>
<div class='t' style='top:422px;font-size:10px;color:#2b2b2b;left:391px;'>077</div>
<div class='t' style='top:422px;font-size:10px;color:#2b2b2b;left:517px;'>077</div>
<div class='t' style='top:422px;font-size:10px;color:#2b2b2b;left:694.3px;'>Bowl</div>
<div class='t' style='top:422px;font-size:10px;color:#2b2b2b;right:183.39999999999998px;'>8.50</div>
<div class='t' style='top:422px;font-size:10px;color:#2b2b2b;left:856.7px;'>Soup</div>
<div class='r' style='left:183px;top:456px;width:822px;height:1px;background:#e2e2e2'></div>
<div class='t' style='top:442px;font-size:10px;color:#2b2b2b;left:190.3px;'>9. Rolled up beef noodles/Phở cuốn</div>
<div class='t' style='top:442px;font-size:10px;color:#2b2b2b;left:391px;'>042</div>
<div class='t' style='top:442px;font-size:10px;color:#2b2b2b;left:517px;'>042</div>
<div class='t' style='top:442px;font-size:10px;color:#2b2b2b;left:694.3px;'>Bowl</div>
<div class='t' style='top:442px;font-size:10px;color:#2b2b2b;right:183.39999999999998px;'>8.90</div>
<div class='r' style='left:183px;top:475px;width:822px;height:1px;background:#e2e2e2'></div>
<div class='t' style='top:461px;font-size:10px;color:#2b2b2b;left:190.3px;'>Beef Brisket/Thịt gầu bò Mỹ</div>
<div class='t' style='top:461px;font-size:10px;color:#2b2b2b;left:391px;'>069</div>
<div class='t' style='top:461px;font-size:10px;color:#2b2b2b;left:517px;'>069</div>
<div class='t' style='top:461px;font-size:10px;color:#2b2b2b;left:694.3px;'>Dish</div>
<div class='t' style='top:461px;font-size:10px;color:#2b2b2b;right:183.39999999999998px;'>6.00</div>
<div class='t' style='top:461px;font-size:10px;color:#2b2b2b;left:856.7px;'>Beef</div>
<div class='r' style='left:183px;top:494px;width:822px;height:1px;background:#e2e2e2'></div>
<div class='t' style='top:480px;font-size:10px;color:#2b2b2b;left:190.3px;'>Beef rice noodles/Bún bò</div>
<div class='t' style='top:480px;font-size:10px;color:#2b2b2b;left:391px;'>014</div>
<div class='t' style='top:480px;font-size:10px;color:#2b2b2b;left:694.3px;'>Bowl</div>
<div class='t' style='top:480px;font-size:10px;color:#2b2b2b;right:183.39999999999998px;'>8.90</div>
<div class='r' style='left:183px;top:514px;width:822px;height:1px;background:#e2e2e2'></div>
<div class='t' style='top:499px;font-size:10px;color:#2b2b2b;left:190.3px;'>Beef Shank/Thịt bắp bò Mỹ</div>
<div class='t' style='top:499px;font-size:10px;color:#2b2b2b;left:391px;'>068</div>
<div class='t' style='top:499px;font-size:10px;color:#2b2b2b;left:694.3px;'>Dish</div>
<div class='t' style='top:499px;font-size:10px;color:#2b2b2b;right:183.39999999999998px;'>6.00</div>
<div class='t' style='top:499px;font-size:10px;color:#2b2b2b;left:856.7px;'>Beef</div>
<div class='r' style='left:183px;top:533px;width:822px;height:1px;background:#e2e2e2'></div>
<div class='t' style='top:519px;font-size:10px;color:#2b2b2b;left:190.3px;'>Chicken Corn Soup/Súp gà ngô non</div>
<div class='t' style='top:519px;font-size:10px;color:#2b2b2b;left:694.3px;'>Bowl</div>
<div class='t' style='top:519px;font-size:10px;color:#2b2b2b;right:183.39999999999998px;'>5.00</div>
<div class='t' style='top:519px;font-size:10px;color:#2b2b2b;left:856.7px;'>Rice noodles</div>
<div class='r' style='left:183px;top:552px;width:822px;height:1px;background:#e2e2e2'></div>
<div class='t' style='top:538px;font-size:10px;color:#2b2b2b;left:190.3px;'>Chicken Fried Rice/Cơm gà</div>
<div class='t' style='top:538px;font-size:10px;color:#2b2b2b;left:694.3px;'>Dish</div>
<div class='t' style='top:538px;font-size:10px;color:#2b2b2b;right:183.39999999999998px;'>11.00</div>
<div class='r' style='left:183px;top:571px;width:822px;height:1px;background:#e2e2e2'></div>
<div class='t' style='top:557px;font-size:10px;color:#2b2b2b;left:190.3px;'>Crab rice noodles/Bún cua</div>
<div class='t' style='top:557px;font-size:10px;color:#2b2b2b;left:391px;'>009</div>
<div class='t' style='top:557px;font-size:10px;color:#2b2b2b;left:694.3px;'>Bowl</div>
<div class='t' style='top:557px;font-size:10px;color:#2b2b2b;right:183.39999999999998px;'>8.90</div>
<div class='r' style='left:183px;top:591px;width:822px;height:1px;background:#e2e2e2'></div>
<div class='t' style='top:576px;font-size:10px;color:#2b2b2b;left:190.3px;'>Ga Ran</div>
<div class='t' style='top:576px;font-size:10px;color:#2b2b2b;left:694.3px;'>Bowl</div>
<div class='t' style='top:576px;font-size:10px;color:#2b2b2b;right:183.39999999999998px;'>0.00</div>
<div class='t' style='top:576px;font-size:10px;color:#2b2b2b;left:856.7px;'>Other</div>
<div class='r' style='left:183px;top:610px;width:822px;height:1px;background:#e2e2e2'></div>
<div class='t' style='top:596px;font-size:10px;color:#2b2b2b;left:190.3px;'>Hot rice noodle soup/Bún thang</div>
<div class='t' style='top:596px;font-size:10px;color:#2b2b2b;left:391px;'>005</div>
<div class='t' style='top:596px;font-size:10px;color:#2b2b2b;left:694.3px;'>Bowl</div>
<div class='t' style='top:596px;font-size:10px;color:#2b2b2b;right:183.39999999999998px;'>8.90</div>
<div class='t' style='top:596px;font-size:10px;color:#2b2b2b;left:856.7px;'>Rice noodles</div>
<div class='r' style='left:183px;top:629px;width:822px;height:1px;background:#e2e2e2'></div>
<div class='t' style='top:615px;font-size:10px;color:#2b2b2b;left:190.3px;'>Kebab rice noodles/Bún chả</div>
<div class='t' style='top:615px;font-size:10px;color:#2b2b2b;left:391px;'>037</div>
<div class='t' style='top:615px;font-size:10px;color:#2b2b2b;left:694.3px;'>Bowl</div>
<div class='t' style='top:615px;font-size:10px;color:#2b2b2b;right:183.39999999999998px;'>8.90</div>
<div class='t' style='top:615px;font-size:10px;color:#2b2b2b;left:856.7px;'>Rice noodles</div>
<div class='r' style='left:183px;top:648px;width:822px;height:1px;background:#e2e2e2'></div>
<div class='t' style='top:634px;font-size:10px;color:#2b2b2b;left:190.3px;'>Rice noodles/Bún</div>
<div class='t' style='top:634px;font-size:10px;color:#2b2b2b;left:391px;'>056</div>
<div class='t' style='top:634px;font-size:10px;color:#2b2b2b;left:694.3px;'>Dish</div>
<div class='t' style='top:634px;font-size:10px;color:#2b2b2b;right:183.39999999999998px;'>2.00</div>
<div class='t' style='top:634px;font-size:10px;color:#2b2b2b;left:856.7px;'>Rice noodles</div>
<div class='r' style='left:183px;top:668px;width:822px;height:1px;background:#e2e2e2'></div>
<div class='t' style='top:653px;font-size:10px;color:#2b2b2b;left:190.3px;'>Snail rice noodles/Bún ốc</div>
<div class='t' style='top:653px;font-size:10px;color:#2b2b2b;left:391px;'>039</div>
<div class='t' style='top:653px;font-size:10px;color:#2b2b2b;left:694.3px;'>Bowl</div>
<div class='t' style='top:653px;font-size:10px;color:#2b2b2b;right:183.39999999999998px;'>8.90</div>
<div class='t' style='top:653px;font-size:10px;color:#2b2b2b;left:856.7px;'>Rice noodles</div>
<div class='r' style='left:183px;top:687px;width:822px;height:1px;background:#e2e2e2'></div>
<div class='t' style='top:673px;font-size:10px;color:#2b2b2b;left:190.3px;'>vermicelli sprouting/Bún mọc</div>
<div class='t' style='top:673px;font-size:10px;color:#2b2b2b;left:391px;'>063</div>
<div class='t' style='top:673px;font-size:10px;color:#2b2b2b;left:694.3px;'>Bowl</div>
<div class='t' style='top:673px;font-size:10px;color:#2b2b2b;right:183.39999999999998px;'>8.90</div>
<div class='t' style='top:673px;font-size:10px;color:#2b2b2b;left:856.7px;'>Rice noodles</div>
<div class='r' style='left:1004.8px;top:183px;width:12.5px;height:504.5px;background:#f1f1f1'></div>
<svg style='left:1007.5px;top:187.5px' width='7' height='4'><path d='M0 4H7L3.5 0Z' fill='#505050'/></svg>
<div class='r' style='left:1006px;top:475.8px;width:10px;height:199px;background:#c1c1c1'></div>
<svg style='left:1007.5px;top:677.5px' width='7' height='4'><path d='M0 0H7L3.5 4Z' fill='#a3a3a3'/></svg>
<div class='r' style='left:183px;top:687.5px;width:821.8px;height:13.8px;background:#f1f1f1'></div>
<div class='r' style='left:183px;top:687.5px;width:821.8px;height:0.8px;background:#e0e0e0'></div>
<div class='r' style='left:196px;top:689.6px;width:369.7px;height:9.4px;background:#c1c1c1'></div>
<svg style='left:186px;top:691.5px' width='4' height='7'><path d='M4 0V7L0 3.5Z' fill='#a3a3a3'/></svg>
<svg style='left:997px;top:691.5px' width='4' height='7'><path d='M0 0V7L4 3.5Z' fill='#505050'/></svg>
<div class='r' style='left:1004.8px;top:687.5px;width:12.5px;height:13.8px;background:#dcdcdc'></div>
<div class='r' style='left:183px;top:701.3px;width:834.3px;height:1px;background:#e6e6e6'></div>
<svg style='left:0;top:0' width='400' height='728'><path d='M191.4 706.5 L188.7 712.0 L191.4 717.5 H188.7 L186 712.0 L188.7 706.5Z' fill='#c6c6c6'/><path d='M197.8 706.5 L195.1 712.0 L197.8 717.5 H195.1 L192.4 712.0 L195.1 706.5Z' fill='#c6c6c6'/><path d='M218.4 706.5 L215.7 712.0 L218.4 717.5 H215.7 L213 712.0 L215.7 706.5Z' fill='#c6c6c6'/><path d='M351 706.5 L353.7 712.0 L351 717.5 H353.7 L356.4 712.0 L353.7 706.5Z' fill='#c6c6c6'/><path d='M372.6 706.5 L375.3 712.0 L372.6 717.5 H375.3 L378.0 712.0 L375.3 706.5Z' fill='#c6c6c6'/><path d='M379 706.5 L381.7 712.0 L379 717.5 H381.7 L384.4 712.0 L381.7 706.5Z' fill='#c6c6c6'/></svg>
<div class='r' style='left:232.8px;top:707.5px;width:1px;height:9px;background:#d0d0d0'></div>
<div class='r' style='left:337.8px;top:707.5px;width:1px;height:9px;background:#d0d0d0'></div>
<div class='r' style='left:394.6px;top:707.5px;width:1px;height:9px;background:#d0d0d0'></div>
<div class='r' style='left:426.5px;top:707.5px;width:1px;height:9px;background:#d0d0d0'></div>
<div class='t' style='top:707px;font-size:9.5px;color:#2b2b2b;letter-spacing:-0.394px;left:242.5px;'>Page</div>
<div class='r' style='left:275.6px;top:702.7px;width:30.2px;height:17.6px;background:#fcfcfc;border:1px solid #e3e3e3'></div>
<div class='t' style='top:707px;font-size:9.5px;color:#1b1b5a;left:280.8px;'>1</div>
<div class='t' style='top:707px;font-size:9.5px;color:#2b2b2b;letter-spacing:0.285px;left:311px;'>of 1</div>
<svg style='left:404px;top:705.8px' width='13' height='12' viewBox='-6.5 -6 13 12'>
<path d='M4.6 -2.4 A5 5 0 1 0 5 1.6' fill='none' stroke='#9a9a9a' stroke-width='1.8'/>
<path d='M1.6 -3.2 L5.8 -5.6 L5.8 -0.6Z' fill='#9a9a9a'/></svg>
<div class='r' style='left:456.2px;top:702.6px;width:45.4px;height:17.8px;background:#fff;border:1px solid #e6e6e6'></div>
<div class='r' style='left:457.2px;top:703.6px;width:27px;height:15.8px;background:#f0f0f0'></div>
<div class='t' style='top:707px;font-size:9.5px;color:#2b2b2b;letter-spacing:-0.223px;left:460.8px;'>100</div>
<svg style='left:489.5px;top:709.5px' width='7' height='4'><path d='M0 0H7L3.5 4Z' fill='#8a8a8a'/></svg>
<div class='t' style='top:707px;font-size:10px;color:#2b2b2b;letter-spacing:0.056px;left:935.1px;'>1 - 63/63 results</div>
<div class='r' style='left:1007.2px;top:341.7px;width:20px;height:18px;background:#1373e3;border-radius:3px 0 0 3px'></div>
<svg style='left:1012.5px;top:346px' width='7' height='10' viewBox='0 0 7 10'><path d='M1.2 0.8 L5.4 5 L1.2 9.2' fill='none' stroke='#fff' stroke-width='1.1'/></svg>
<div class='r' style='left:984px;top:365.2px;width:48px;height:43.8px;background:#fff;border-radius:6px;box-shadow:0 1px 4px rgba(0,0,0,0.18)'></div>
<svg style='left:988.7px;top:371.1px' width='32' height='32' viewBox='-16 -16 32 32'>
<circle r='16' fill='#0b6fd8'/>
<circle cx='-6.6' cy='-4.4' r='3.3' fill='#cfe3f7'/><circle cx='6.6' cy='-4.4' r='3.3' fill='#cfe3f7'/>
<ellipse cx='0' cy='0.6' rx='9' ry='7.4' fill='#fff'/>
<ellipse cx='0' cy='1.2' rx='6.9' ry='4.3' fill='#1a2a7a'/>
<circle cx='-3' cy='1' r='1.5' fill='none' stroke='#a8c4e4' stroke-width='0.9'/><circle cx='3' cy='1' r='1.5' fill='none' stroke='#a8c4e4' stroke-width='0.9'/>
</svg>
<div class='r' style='left:2.25px;top:166.5px;width:171.5px;height:31.599999999999994px;border:2.1px solid #f0403e;box-shadow:0 0.5px 2.5px rgba(0,0,0,0.45), inset 0 2px 2.5px rgba(0,0,0,0.3)'></div>
<div class='r' style='left:3.099999999999998px;top:151.2px;width:30.6px;height:30.6px;border-radius:50%;background:#f0403e;box-shadow:0 2px 3px rgba(0,0,0,0.35)'></div>
<svg style='left:0;top:0' width='40' height='200'><path d='M15.4 162.4 L21.3 159 H23.2 V174.6 H21 V161.9 L15.4 164.6Z' fill='#fff'/></svg>
<div class='r' style='left:181.25px;top:340.6px;width:398.15px;height:23.149999999999977px;border:2.1px solid #f0403e;box-shadow:0 0.5px 2.5px rgba(0,0,0,0.45), inset 0 2px 2.5px rgba(0,0,0,0.3)'></div>
<div class='r' style='left:174.75px;top:320.35px;width:30.5px;height:30.5px;border-radius:50%;background:#f0403e;box-shadow:0 2px 3px rgba(0,0,0,0.35)'></div>
<div class='t' style='top:325px;font-size:21.5px;color:#fff;left:184px;'>2</div>
</body></html>
